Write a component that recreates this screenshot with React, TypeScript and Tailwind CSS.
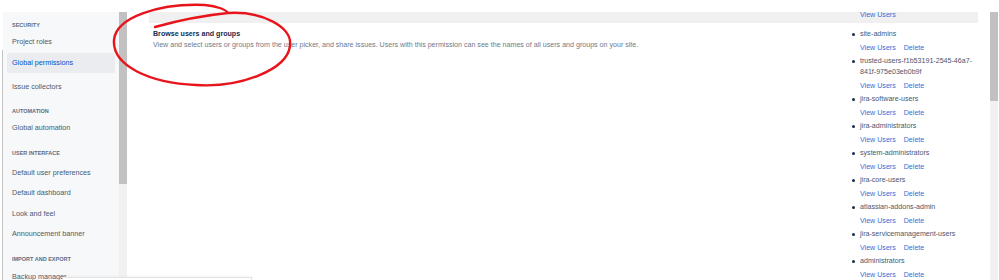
import React from 'react';

const sections = [
  { title: 'SECURITY', items: ['Project roles', 'Global permissions', 'Issue collectors'], mt: '', listMt: 'mt-[2px]' },
  { title: 'AUTOMATION', items: ['Global automation'], mt: 'mt-[8px]', listMt: 'mt-[3px]' },
  {
    title: 'USER INTERFACE',
    items: ['Default user preferences', 'Default dashboard', 'Look and feel', 'Announcement banner'],
    mt: 'mt-[9px]',
    listMt: 'mt-[5px]',
  },
  { title: 'IMPORT AND EXPORT', items: ['Backup manager'], mt: 'mt-[9px]', listMt: 'mt-[3px]' },
];

const groups: string[][] = [
  ['site-admins'],
  ['trusted-users-f1b53191-2545-46a7-', '841f-975e03eb0b9f'],
  ['jira-software-users'],
  ['jira-administrators'],
  ['system-administrators'],
  ['jira-core-users'],
  ['atlassian-addons-admin'],
  ['jira-servicemanagement-users'],
  ['administrators'],
];

function Sidebar() {
  return (
    <aside className="w-[116px] shrink-0 bg-[#f7f8f9] px-[4px] pt-[8px]">
      {sections.map((section) => (
        <div key={section.title} className={section.mt}>
          <div className="h-[10px] px-[5px] text-[5.5px] font-bold leading-[10px] text-[#5e6c84]">
            {section.title}
          </div>
          <ul className={section.listMt}>
            {section.items.map((item) => {
              const active = item === 'Global permissions';
              return (
                <li
                  key={item}
                  className={`flex h-[20.5px] items-center rounded-[2px] px-[5px] text-[7.2px] ${
                    active ? 'bg-[#ebecf0] pt-[1px] text-[#0052cc]' : 'text-[#4a5870]'
                  } ${item === 'Issue collectors' ? 'mt-[4px]' : ''}`}
                >
                  {item}
                </li>
              );
            })}
          </ul>
        </div>
      ))}
    </aside>
  );
}

function Links() {
  return (
    <div className="mt-[3px] flex h-[11px] gap-[8px] pl-[12px] leading-[11px] text-[#3170d8]">
      <span>View Users</span>
      <span>Delete</span>
    </div>
  );
}

function PermissionTable() {
  return (
    <div className="w-[829px] shrink-0 text-[7.1px]">
      <div className="grid h-[11px] grid-cols-[699px_130px] overflow-hidden bg-[#f0f0f0]">
        <div />
        <div className="-mt-[2px] pl-[12px] leading-[11px] text-[#3170d8]">View Users</div>
      </div>
      <div className="grid grid-cols-[699px_130px]">
        <div className="pl-[4px] pt-[6px] leading-[11px]">
          <div className="font-bold text-[#172b4d]">Browse users and groups</div>
          <div className="text-[#707a8a]">
            View and select users or groups from the user picker, and share issues. Users with this permission
            can see the names of all users and groups on your site.
          </div>
        </div>
        <ul className="pt-[6px]">
          {groups.map((lines) => (
            <li key={lines[0]} className="mb-[2px]">
              <div className="flex leading-[11px] text-[#4a5870]">
                <div className="flex h-[11px] w-[12px] shrink-0 items-center pl-[4px]">
                  <span className="h-[2.5px] w-[2.5px] rounded-full bg-[#172b4d]" />
                </div>
                <div className="whitespace-nowrap">
                  {lines.map((l) => (
                    <div key={l}>{l}</div>
                  ))}
                </div>
              </div>
              <Links />
            </li>
          ))}
        </ul>
      </div>
    </div>
  );
}

function Scrollbar({ thumb }: { thumb: string }) {
  return (
    <div className="w-[8px] shrink-0 bg-[#f1f1f1]">
      <div className={`${thumb} w-full bg-[#c1c1c1]`} />
    </div>
  );
}

export default function App() {
  return (
    <div className="relative h-[280px] w-[999px] overflow-hidden bg-white font-['Liberation_Sans',Arial,sans-serif]">
      <div className="flex h-full pt-[12px]">
        <div className="w-[2px] shrink-0" />
        <div className="mt-[38px] w-[1px] shrink-0 bg-[#c4c4c4]" />
        <Sidebar />
        <Scrollbar thumb="h-[172px]" />
        <div className="w-[22px] shrink-0" />
        <PermissionTable />
        <div className="w-[12px] shrink-0" />
        <Scrollbar thumb="h-[89px]" />
      </div>

      {/* floating panel peeking in at the bottom */}
      <div className="absolute left-[62px] top-[277px] h-[10px] w-[190px] border border-[#e3e3e3] bg-white shadow-[0_-1px_2px_rgba(0,0,0,0.04)]" />

      {/* red hand-drawn annotation */}
      <svg className="pointer-events-none absolute left-0 top-0" width="999" height="280" viewBox="0 0 999 280">
        <path
          d="M155 27 C 180 20, 208 15, 228 13 C 262 11, 293 27, 290 46 C 287 70, 240 88, 196 85 C 150 83, 112 66, 114 40 C 116 17, 160 3, 205 5 C 218 6, 226 10, 228 13"
          fill="none"
          stroke="#e8141c"
          strokeWidth="2.4"
          strokeLinecap="round"
        />
      </svg>
    </div>
  );
}
